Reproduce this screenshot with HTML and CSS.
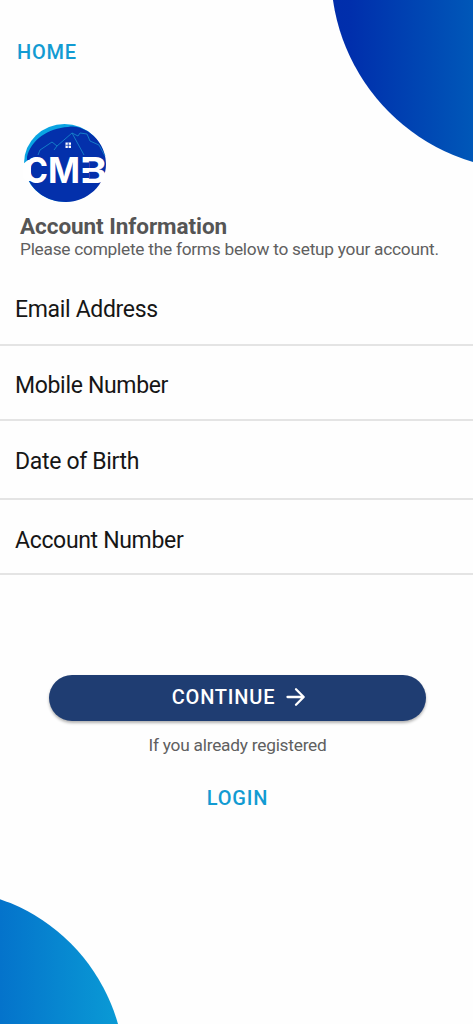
FILE: index.html
```html
<!DOCTYPE html>
<html lang="en">
<head>
<meta charset="utf-8">
<meta name="viewport" content="width=device-width, initial-scale=1">
<title>Account Information</title>
<link rel="stylesheet" href="styles.css">
</head>
<body>
<div class="screen">
  <div class="blob blob-top"></div>
  <div class="blob blob-bottom"></div>
  <nav class="nav"><a class="link">HOME</a></nav>
  <header class="header">
    <svg class="logo" viewBox="0 0 86 82" aria-label="CMB">
      <ellipse cx="42.500" cy="41" rx="40.500" ry="39" fill="#0aa4e2"/>
      <path d="M5 35C9 18 26 6 46 5C52 4 57 5 61 7C75 13 84 27 84 42C84 63 65 80 44 80C25 80 10 69 5 54Z" fill="#0330ab"/>
      <path d="M16 33L18 28L30 20L35 24L50 11L62 33M35 24L32 28M50 11L56 14L58 11L65 12L68 19L77 23L83 34" fill="none" stroke="#1684cb" stroke-width="0.9"/>
      <path d="M43.500 20.500h5.500v5.500h-5.500z" fill="#fff"/>
      <path d="M46.250 20.500v5.500M43.500 23.250h5.500" stroke="#0330ab" stroke-width="0.8"/>
      <path d="M1 42L6 38H9V59H6L1 56Z" fill="#fff"/>
      <text class="logo-text" x="2" y="61.200" textLength="24" lengthAdjust="spacingAndGlyphs">C</text>
      <text class="logo-text" x="26" y="61.200" textLength="32" lengthAdjust="spacingAndGlyphs">M</text>
      <text class="logo-text" x="58" y="61.200" textLength="27" lengthAdjust="spacingAndGlyphs">B</text>
      <path d="M59 40.500H67V46H59ZM59 51H67V56H59Z" fill="#0330ab"/>
    </svg>
    <h1 class="title">Account Information</h1>
    <p class="subtitle">Please complete the forms below to setup your account.</p>
  </header>
  <main class="form">
    <label class="field">Email Address</label>
    <label class="field">Mobile Number</label>
    <label class="field field-date">Date of Birth</label>
    <label class="field field-account">Account Number</label>
  </main>
  <footer class="actions">
    <button class="continue"><span class="continue-text">CONTINUE</span>
      <svg class="arrow" viewBox="0 0 20 20"><path d="M1.500 10H17.500M10 2.300L17.700 10L10 17.700" fill="none" stroke="#fff" stroke-width="2.300" stroke-linecap="round" stroke-linejoin="round"/></svg>
    </button>
    <p class="note">If you already registered</p>
    <a class="link">LOGIN</a>
  </footer>
</div>
</body>
</html>
```
FILE: styles.css
```css
* { box-sizing: border-box; }
body { margin: 0; background: #fefefe; font-family: Roboto, sans-serif; }
.screen { position: relative; height: 1024px; overflow: hidden; }
.blob { position: absolute; border-radius: 50%; }
.blob-top {
  left: 331px; top: -226px; width: 396px; height: 396px;
  background: linear-gradient(90deg, #002dab 0, #002fac 20px, #0057b8 141px, #0064bd 100%);
}
.blob-bottom {
  left: -246px; top: 889px; width: 371px; height: 371px;
  background: linear-gradient(90deg, #0473cb 0, #0473cb 246px, #0a9ad5 364px);
}
.nav { padding: 40px 17px 0; height: 122px; }
.link { display: block; font-size: 20px; line-height: 24px; font-weight: 500; letter-spacing: 0.8px; color: #129bd2; }
.header { padding-left: 20px; height: 148px; }
.logo { display: block; width: 86px; height: 82px; margin-left: 2px; }
.logo-text { font: 700 35.500px Inter, sans-serif; fill: #fff; }
.title { margin: 9px 0 0; font-size: 22.500px; line-height: 26px; font-weight: 700; letter-spacing: -0.06px; color: #555; white-space: nowrap; }
.subtitle { margin: 0; font-size: 17.300px; line-height: 20px; letter-spacing: -0.25px; color: #606060; white-space: nowrap; }
.form { display: flex; flex-direction: column; }
.field { display: flex; align-items: center; height: 75.500px; padding: 7px 0 0 15px; border-bottom: 2px solid #e4e4e4; font-size: 23px; line-height: 28px; letter-spacing: -0.33px; color: #161616; }
.field-date { height: 79px; padding-top: 4px; }
.field-account { height: 75px; padding-top: 8px; }
.actions { display: flex; flex-direction: column; align-items: center; padding: 100px 0 0 2px; }
.continue { display: flex; align-items: center; justify-content: center; gap: 11px; width: 377px; height: 46px; padding: 0 0 2px 3px; border: 0; border-radius: 23px; background: #1f3d72; color: #fff; font: 500 20px/24px Roboto, sans-serif; letter-spacing: 0.8px; box-shadow: 0 2px 3px rgba(0, 0, 0, 0.3); }
.arrow { width: 20px; height: 20px; }
.note { margin: 13px 0 30px; font-size: 17.300px; line-height: 22px; letter-spacing: -0.23px; color: #606060; }
```
